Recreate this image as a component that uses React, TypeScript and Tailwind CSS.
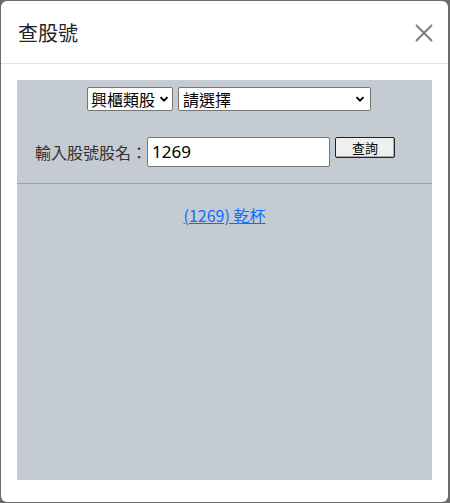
import React from "react";

const cjk = { fontFamily: '"Noto Sans CJK TC", "Noto Sans", sans-serif' };

function Chevron() {
  return (
    <svg width="10" height="10" viewBox="0 0 10 10" className="shrink-0">
      <path d="M1.5 3.2 L5 6.7 L8.5 3.2" fill="none" stroke="#000" strokeWidth="1.8" />
    </svg>
  );
}

export default function App() {
  return (
    <div className="w-[450px] h-[503px] bg-[#6b6b6b] pt-[1px] pl-[1px] pr-[2px] pb-[1px]" style={cjk}>
      <div className="w-[447px] h-[501px] bg-white rounded-[6px] flex flex-col">
        <div className="h-[63px] border-b border-[#dee2e6] flex items-center justify-between pl-[17px] pr-[15px] shrink-0">
          <div className="text-[20px] leading-[30px] text-[#212529] pt-[1px]">查股號</div>
          <svg width="18" height="18" viewBox="0 0 18 18" className="mt-[1px]">
            <path d="M1 1 L17 17 M17 1 L1 17" stroke="#7a7a7a" strokeWidth="1.8" />
          </svg>
        </div>
        <div className="p-[16px] pb-0">
          <div className="h-[400px] bg-[#c4cbd3] flex flex-col">
            <div className="flex justify-center gap-[5px] pt-[7px] pl-[9px]">
              <div className="w-[86px] h-[24px] bg-white border border-[#767676] rounded-[2px] flex items-center justify-between pl-[3px] pr-[3px] text-[16px] text-black leading-none">
                <span>興櫃類股</span>
                <Chevron />
              </div>
              <div className="w-[193px] h-[24px] bg-white border border-[#767676] rounded-[2px] flex items-center justify-between pl-[4px] pr-[5px] text-[16px] text-black leading-none">
                <span>請選擇</span>
                <Chevron />
              </div>
            </div>
            <div className="flex items-start pl-[18px] mt-[26px]">
              <span className="text-[16px] text-[#333] leading-[30px]">輸入股號股名：</span>
              <div className="w-[183px] h-[30px] bg-white border border-[#767676] rounded-[2px] flex items-center pl-[4px] text-[17px] text-black" style={{ fontFamily: '"Noto Sans", sans-serif' }}>
                1269
              </div>
              <div className="ml-[5px] w-[60px] h-[21px] bg-[#efefef] border border-[#222] rounded-[2px] flex items-center justify-center text-[13px] text-black leading-none shadow-[inset_-1px_-1px_0_#aaa]">
                查詢
              </div>
            </div>
            <div className="mt-[16px] h-[1px] bg-[#9ea3a8]" />
            <div className="flex justify-center mt-[20px]">
              <span className="text-[16px] text-[#0d6efd] underline leading-[22px]">(1269) 乾杯</span>
            </div>
          </div>
        </div>
      </div>
    </div>
  );
}
